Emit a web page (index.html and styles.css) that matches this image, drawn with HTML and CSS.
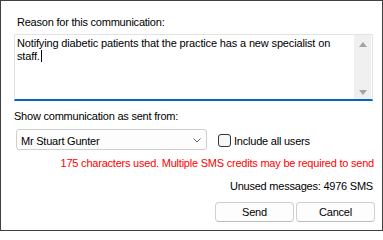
FILE: index.html
```html
<!DOCTYPE html>
<html>
<head>
<meta charset="utf-8">
<link rel="stylesheet" href="styles.css">
</head>
<body>
<div class="window">
  <div class="label reason">Reason for this communication:</div>
  <div class="memo">
    <div class="memo-text">Notifying diabetic patients that the practice has a new specialist on<br>staff.<span class="caret"></span></div>
    <div class="scrollbar">
      <span class="arrow up"></span>
      <span class="arrow down"></span>
    </div>
  </div>
  <div class="label sent">Show communication as sent from:</div>
  <div class="sender-row">
    <div class="select">
      <span class="select-value">Mr Stuart Gunter</span>
      <svg class="chevron" width="8" height="5" viewBox="0 0 8 5"><path d="M0.5 0.5 L4 4 L7.5 0.5" fill="none" stroke="#606060" stroke-width="1"/></svg>
    </div>
    <div class="check"><span class="box"></span><span class="check-label">Include all users</span></div>
  </div>
  <div class="warning">175 characters used. Multiple SMS credits may be required to send</div>
  <div class="unused">Unused messages: 4976 SMS</div>
  <div class="buttons">
    <button class="btn">Send</button>
    <button class="btn">Cancel</button>
  </div>
</div>
</body>
</html>
```
FILE: styles.css
```css
html, body {
  margin: 0;
  padding: 0;
  background: #ffffff;
}
.window {
  width: 383px;
  height: 231px;
  box-sizing: border-box;
  border: 1px solid #404040;
  background: #ffffff;
  padding: 14px 7px 0 13px;
  font-family: "Liberation Sans", Arial, sans-serif;
  font-size: 11px;
  letter-spacing: -0.22px;
  color: #000000;
  display: flex;
  flex-direction: column;
}
.label {
  line-height: 14px;
  height: 14px;
  white-space: nowrap;
}
.reason {
  padding-left: 3px;
}
.memo {
  margin-top: 5px;
  margin-right: 2px;
  height: 67px;
  box-sizing: border-box;
  border: 1px solid #e3e3e3;
  border-bottom: 2px solid #0067c0;
  display: flex;
}
.memo-text {
  flex: 1;
  padding: 2px 0 0 2px;
  line-height: 13px;
  white-space: nowrap;
  letter-spacing: -0.15px;
}
.caret {
  display: inline-block;
  width: 1px;
  height: 12px;
  background: #000000;
  vertical-align: -2px;
  margin-left: 1px;
}
.scrollbar {
  width: 17px;
  margin-right: 1px;
  background: #f0f0f0;
  display: flex;
  flex-direction: column;
  justify-content: space-between;
  align-items: center;
  padding: 7px 0 4px;
}
.arrow {
  width: 0;
  height: 0;
  border-left: 4px solid transparent;
  border-right: 4px solid transparent;
}
.arrow.up {
  border-bottom: 5px solid #a3a3a3;
}
.arrow.down {
  border-top: 5px solid #a3a3a3;
}
.sent {
  margin-top: 8px;
}
.sender-row {
  margin-top: 6px;
  display: flex;
  align-items: center;
  height: 21px;
}
.select {
  margin-left: 2px;
  width: 191px;
  height: 21px;
  box-sizing: border-box;
  border: 1px solid #cfcfcf;
  border-radius: 3px;
  background: #fdfdfd;
  display: flex;
  align-items: center;
  justify-content: space-between;
  padding: 2px 5px 0 4px;
}
.select-value {
  line-height: 14px;
}
.chevron {
  display: block;
  margin-top: -1px;
}
.check {
  margin-left: 11px;
  display: flex;
  align-items: center;
  padding-top: 2px;
}
.box {
  width: 13px;
  height: 13px;
  box-sizing: border-box;
  border: 1px solid #333333;
  border-radius: 3px;
  background: #f7f7f7;
  margin-right: 3px;
}
.check-label {
  line-height: 14px;
}
.warning {
  margin-top: 6px;
  margin-right: 1px;
  text-align: right;
  line-height: 14px;
  color: #ff0000;
  white-space: nowrap;
}
.unused {
  margin-top: 9px;
  margin-right: 2px;
  text-align: right;
  line-height: 14px;
  white-space: nowrap;
}
.buttons {
  margin-top: 9px;
  display: flex;
  justify-content: flex-end;
  gap: 2px;
}
.btn {
  width: 79px;
  height: 20px;
  box-sizing: border-box;
  margin: 0;
  padding: 0;
  border: 1px solid #d0d0d0;
  border-bottom-color: #bcbcbc;
  border-radius: 4px;
  background: #fdfdfd;
  font-family: "Liberation Sans", Arial, sans-serif;
  font-size: 11px;
  letter-spacing: -0.22px;
  color: #000000;
  line-height: 18px;
}
```
